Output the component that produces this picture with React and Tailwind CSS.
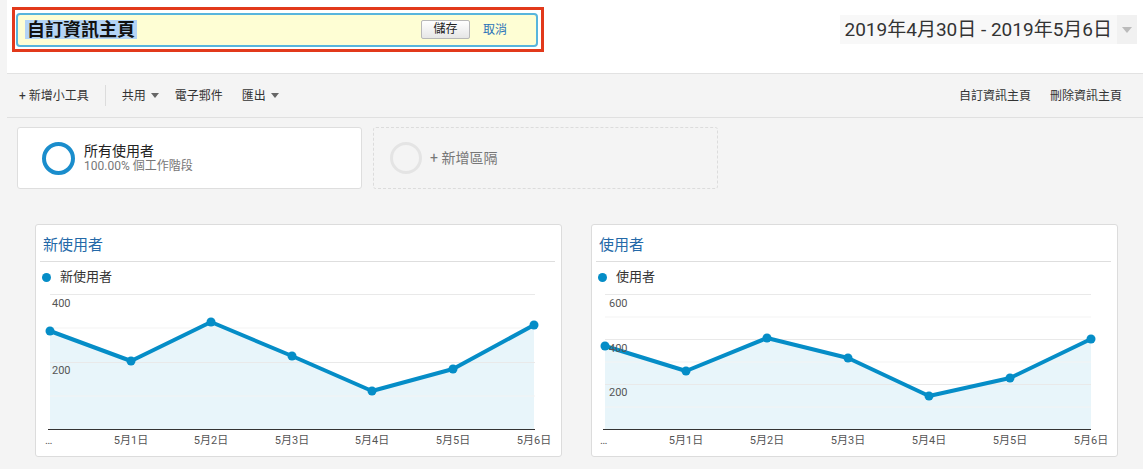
import React from 'react';

const LINE = '#058dc7';

const Caret = () => (
    <svg width="8" height="5" viewBox="0 0 8 5" className="ml-[5px]">
        <path d="M0 0 L8 0 L4 5 Z" fill="#666" />
    </svg>
);

const Chart = ({ points, grid, faint, labels, xs, dots }) => {
    const line = points.map((p, i) => `${i ? 'L' : 'M'}${p[0]} ${p[1]}`).join(' ');
    const area = `${line} L${points[points.length - 1][0]} 142 L${points[0][0]} 142 Z`;
    const days = ['5月1日', '5月2日', '5月3日', '5月4日', '5月5日', '5月6日'];
    return (
        <svg width="525" height="168" className="block">
            <path d={area} fill={LINE} fillOpacity="0.09" />
            {faint.map((y) => (
                <line key={'f' + y} x1={grid[0]} x2={grid[1]} y1={y} y2={y} stroke="#f3f3f3" />
            ))}
            {labels.map((l) => (
                <line key={'g' + l.y} x1={grid[0]} x2={grid[1]} y1={l.gy} y2={l.gy} stroke="#e9e9e9" />
            ))}
            <line x1={grid[0] - 2} x2={grid[1]} y1="142.5" y2="142.5" stroke="#333" />
            <path d={line} fill="none" stroke={LINE} strokeWidth="4" strokeLinejoin="round" />
            {points.map((p, i) => (
                <circle key={i} cx={p[0]} cy={p[1]} r={dots} fill={LINE} />
            ))}
            {labels.map((l) => (
                <text key={'t' + l.y} x={l.x} y={l.y} fontSize="11" fill="#555">{l.t}</text>
            ))}
            <text x={xs[0] - 5} y="157" fontSize="11" fill="#555">…</text>
            {days.map((d, i) => (
                <text key={d} x={xs[i + 1]} y="157" fontSize="11" fill="#555" textAnchor="middle">{d}</text>
            ))}
        </svg>
    );
};

const ChartCard = ({ title, children }) => (
    <div className="w-[527px] h-[233px] bg-white border border-[#dcdcdc] rounded-[3px]">
        <div className="ml-[4px] mr-[6px] pl-[3px] pt-[10px] pb-[6px] h-[37px] border-b border-[#dedede] text-[15px] leading-[20px] text-[#2469a8]">
            {title}
        </div>
        <div className="flex items-center h-[20px] mt-[5px] pl-[6px] text-[13px] text-[#333]">
            <span className="w-[9px] h-[9px] rounded-full bg-[#058dc7]" />
            <span className="ml-[9px]">{title}</span>
        </div>
        {children}
    </div>
);

export default function App() {
    return (
        <div className="min-h-screen bg-[#f4f4f4] pl-[7px] font-[Roboto,'Noto_Sans_CJK_TC',sans-serif] text-[#333]">
            {/* header */}
            <div className="h-[74px] bg-white border-b border-[#e2e2e2] flex justify-between">
                <div className="mt-[7px] ml-[5px] w-[532px] h-[45px] border-[3px] border-[#e2391b] flex items-center">
                    <div className="ml-[1px] w-[522px] h-[34px] border-2 border-[#58b5dc] rounded-[4px] bg-[#fefed4] flex items-center pl-[7px]">
                        <span className="bg-[#b4d4f5] px-[2px] text-[18px] leading-[19px] font-bold text-[#111]">自訂資訊主頁</span>
                        <div className="flex-1" />
                        <button className="w-[49px] h-[19px] border border-[#b8b8b8] rounded-[2px] bg-gradient-to-b from-white to-[#e6e6e6] text-[12px] leading-[17px] text-[#222]">儲存</button>
                        <span className="ml-[13px] mr-[29px] text-[12px] text-[#2a72b8]">取消</span>
                    </div>
                </div>
                <div className="mt-[15px] mr-[6px] h-[29px] bg-[#f8f8f8] flex items-center">
                    <span className="pl-[5px] pr-[5px] text-[19px] leading-[29px] text-[#333]">2019年4月30日 - 2019年5月6日</span>
                    <span className="w-[20px] h-[29px] bg-[#f1f1f1] flex items-center justify-center">
                        <svg width="10" height="6" viewBox="0 0 10 6"><path d="M0 0 L10 0 L5 6 Z" fill="#bbb" /></svg>
                    </span>
                </div>
            </div>

            {/* toolbar */}
            <div className="h-[44px] border-b border-[#e0e0e0] flex items-center text-[12px] text-[#333] pl-[12px] pr-[21px]">
                <span>+ 新增小工具</span>
                <span className="mx-[16px] w-px h-[21px] bg-[#dcdcdc]" />
                <span className="flex items-center">共用<Caret /></span>
                <span className="ml-[16px]">電子郵件</span>
                <span className="ml-[19px] flex items-center">匯出<Caret /></span>
                <div className="flex-1" />
                <span>自訂資訊主頁</span>
                <span className="ml-[19px]">刪除資訊主頁</span>
            </div>

            {/* segments */}
            <div className="flex gap-[11px] mt-[9px] ml-[10px]">
                <div className="w-[345px] h-[62px] bg-white border border-[#dedede] rounded-[3px] flex items-center pl-[24px]">
                    <span className="w-[33px] h-[33px] rounded-full border-[4px] border-[#1a8dcc]" />
                    <div className="ml-[9px]">
                        <div className="text-[14px] leading-[16px] text-[#222]">所有使用者</div>
                        <div className="text-[12px] leading-[14px] text-[#777]">100.00% 個工作階段</div>
                    </div>
                </div>
                <div className="w-[345px] h-[62px] border border-dashed border-[#dcdcdc] rounded-[3px] flex items-center pl-[16px]">
                    <span className="w-[32px] h-[32px] rounded-full border-[3px] border-[#e4e4e4]" />
                    <span className="ml-[8px] text-[14px] text-[#777]">+ 新增區隔</span>
                </div>
            </div>

            {/* charts */}
            <div className="flex gap-[29px] mt-[35px] ml-[28px]">
                <ChartCard title="新使用者">
                    <Chart
                        points={[[14, 44], [95, 74], [175, 35], [256, 69], [336, 104], [417, 82], [498, 38]]}
                        grid={[14, 499]}
                        faint={[41, 109]}
                        labels={[{ t: '400', x: 16, y: 20, gy: 7.5 }, { t: '200', x: 16, y: 87, gy: 75.5 }]}
                        xs={[14, 95, 175, 256, 336, 417, 498]}
                        dots={4.5}
                    />
                </ChartCard>
                <ChartCard title="使用者">
                    <Chart
                        points={[[13, 59], [94, 84], [175, 51], [256, 71], [337, 109], [418, 91], [499, 52]]}
                        grid={[13, 499]}
                        faint={[30, 75, 120]}
                        labels={[{ t: '600', x: 17, y: 20, gy: 7.5 }, { t: '400', x: 17, y: 65, gy: 52.5 }, { t: '200', x: 17, y: 109, gy: 97.5 }]}
                        xs={[13, 94, 175, 256, 337, 418, 499]}
                        dots={4.5}
                    />
                </ChartCard>
            </div>
        </div>
    );
}
